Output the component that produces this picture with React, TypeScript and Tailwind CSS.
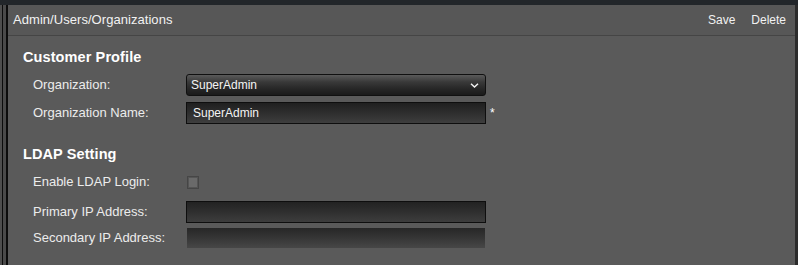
import React from 'react';

const labelCls = 'w-[153px] shrink-0 text-[13px] text-[#ececec]';

const Chevron = () => (
  <svg width="9" height="5" viewBox="0 0 9 5" className="shrink-0">
    <polyline points="1,0.8 4.5,4 8,0.8" fill="none" stroke="#f2f2f2" strokeWidth="1.5" />
  </svg>
);

const App = () => {
  return (
    <div className="w-[798px] h-[265px] flex flex-col overflow-hidden bg-[#23272a] font-['Liberation_Sans',Arial,sans-serif]">
      <div className="h-[5px] shrink-0 bg-[#22262a]" />
      <div className="flex flex-1 min-h-0">
        {/* left rail */}
        <div className="flex w-[8px] shrink-0">
          <div className="w-[2px] bg-[#4e4e4e]" />
          <div className="w-[1px] bg-[#0c0c0c]" />
          <div className="w-[3px] bg-[#4a4a4a]" />
          <div className="w-[2px] bg-[#0c0c0c]" />
        </div>

        <div className="flex-1 flex flex-col bg-[#5a5a5a]">
          {/* header */}
          <div className="h-[31px] shrink-0 flex items-center justify-between pl-[5px] pr-[9px] bg-[#575757] border-b border-[#454545]">
            <span className="text-[13px] tracking-[0.05px] text-[#f2f2f2]">Admin/Users/Organizations</span>
            <div className="flex gap-[16px] text-[12px] text-[#f2f2f2]">
              <span>Save</span>
              <span>Delete</span>
            </div>
          </div>

          <div className="pl-[15px] pt-[12px]">
            <div className="h-[18px] leading-[18px] text-[14.5px] tracking-[0.1px] font-bold text-white">Customer Profile</div>

            <div className="pl-[10px] mt-[8px] flex flex-col gap-[6px]">
              <div className="flex items-center h-[22px]">
                <span className={labelCls}>Organization:</span>
                <div className="w-[300px] h-[22px] flex items-center justify-between pl-[4px] pr-[6px] rounded-[3px] border border-[#101010] bg-[linear-gradient(to_bottom,#5a5a5a,#393939_35%,#262626_70%,#1a1a1a)]">
                  <span className="text-[12px] text-[#f4f4f4]">SuperAdmin</span>
                  <Chevron />
                </div>
              </div>
              <div className="flex items-center h-[22px]">
                <span className={labelCls}>Organization Name:</span>
                <div className="w-[300px] h-[22px] flex items-center pl-[6px] border border-[#0e0e0e] bg-[linear-gradient(to_bottom,#1f1f1f,#2e2e2e_50%,#3e3e3e)]">
                  <span className="text-[12px] text-[#f4f4f4]">SuperAdmin</span>
                </div>
                <span className="ml-[4px] text-[12px] text-white">*</span>
              </div>
            </div>

            <div className="mt-[21px] h-[18px] leading-[18px] text-[14.5px] tracking-[0.1px] font-bold text-white">LDAP Setting</div>

            <div className="pl-[10px] mt-[8px] flex flex-col">
              <div className="flex items-center h-[22px]">
                <span className={labelCls}>Enable LDAP Login:</span>
                <div className="ml-[1px] w-[12px] h-[13px] border border-[#464646] bg-[#555555] p-[1px]">
                  <div className="w-full h-full bg-[#6a6a6a]" />
                </div>
              </div>
              <div className="flex items-center h-[22px] mt-[8px]">
                <span className={labelCls}>Primary IP Address:</span>
                <div className="w-[300px] h-[22px] border border-[#0e0e0e] bg-[linear-gradient(to_bottom,#222222,#2f2f2f_50%,#3d3d3d)]" />
              </div>
              <div className="flex items-center h-[20px] mt-[5px]">
                <span className={labelCls}>Secondary IP Address:</span>
                <div className="ml-[1px] w-[298px] h-[20px] bg-[linear-gradient(to_bottom,#272727,#363636_50%,#474747)]" />
              </div>
            </div>
          </div>
        </div>

        <div className="w-[3px] shrink-0 bg-[#2c2c2c]" />
      </div>
    </div>
  );
};

export default App;
